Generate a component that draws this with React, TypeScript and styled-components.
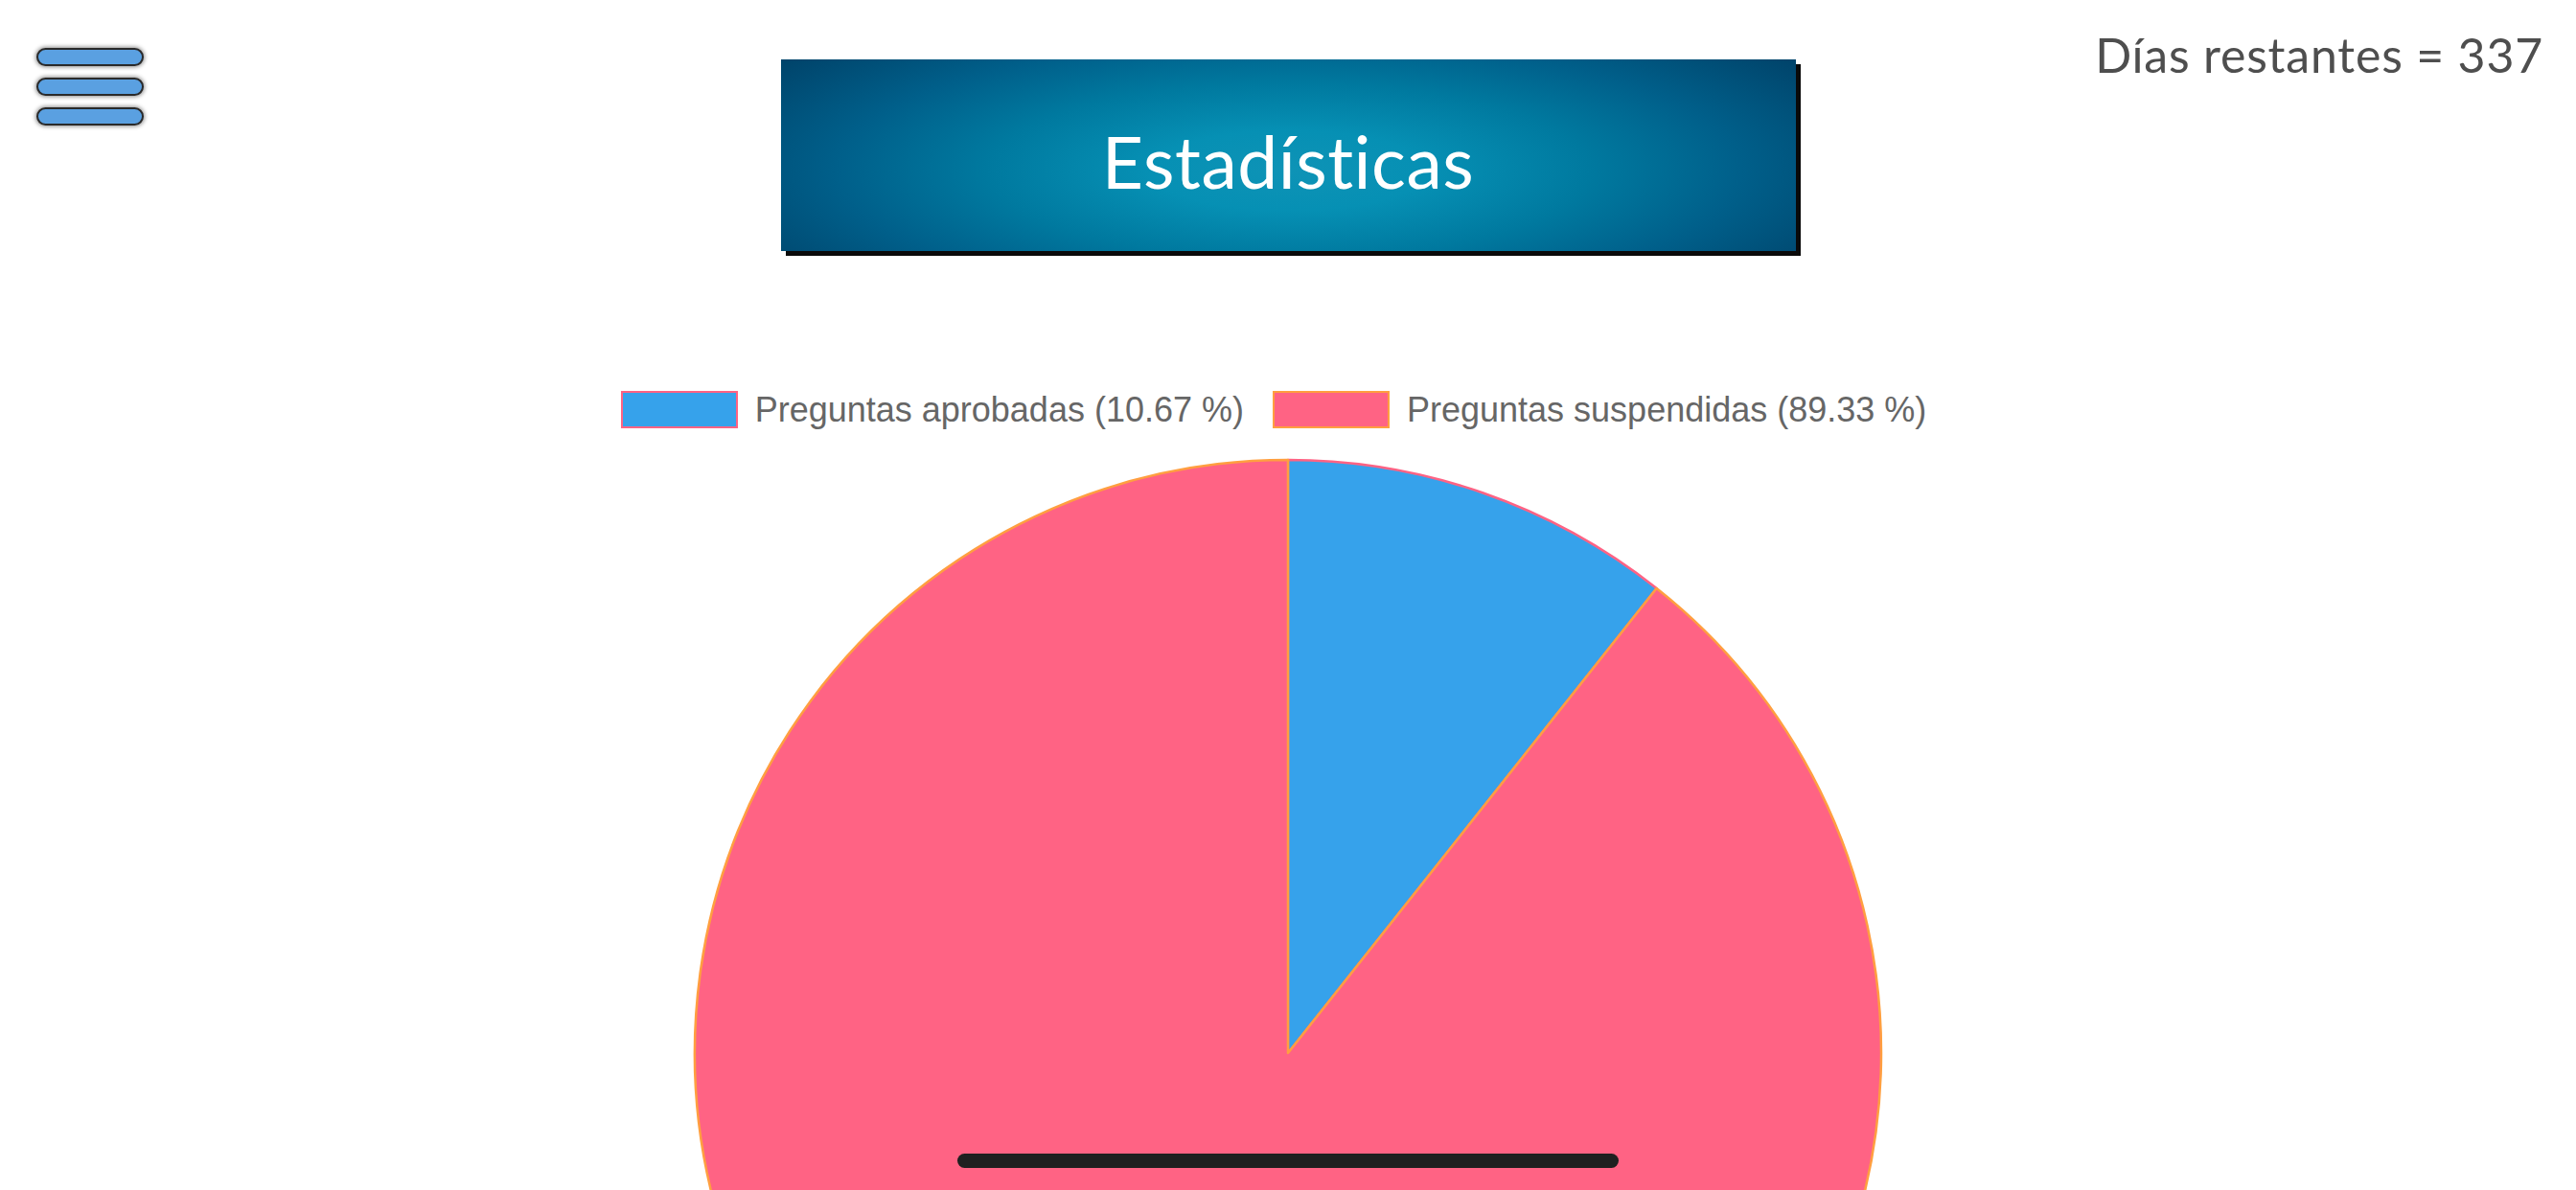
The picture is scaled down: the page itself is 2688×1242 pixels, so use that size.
import React from "react";
import styled, { createGlobalStyle } from "styled-components";

const Global = createGlobalStyle`
  html, body { margin: 0; padding: 0; background: #ffffff; overflow: hidden; }
  body { width: 2688px; height: 1242px; }
  * { box-sizing: border-box; }
`;

const Page = styled.div`
  position: relative;
  width: 2688px;
  height: 1242px;
  overflow: hidden;
  background: #ffffff;
`;

const Header = styled.header`
  display: grid;
  grid-template-columns: 1fr auto 1fr;
  align-items: start;
  height: 262px;
`;

const MenuButton = styled.button`
  display: flex;
  flex-direction: column;
  gap: 12px;
  margin: 50px 0 0 38px;
  padding: 0;
  border: none;
  background: transparent;
  width: 112px;
  justify-self: start;
`;

const MenuBar = styled.span`
  display: block;
  width: 112px;
  height: 19px;
  border-radius: 10px;
  background: #5aa0e1;
  border: 2px solid #2a2a2a;
  box-shadow: 0 0 4px 1px rgba(0, 0, 0, 0.45);
`;

const TitleBox = styled.div`
  margin-top: 62px;
  width: 1059px;
  height: 200px;
  padding-top: 12px;
  display: flex;
  align-items: center;
  justify-content: center;
  background: radial-gradient(
    ellipse 62% 95% at 50% 58%,
    #0e93b6 0%,
    #0690b4 22%,
    #00799f 48%,
    #005f8a 72%,
    #00446b 100%
  );
  box-shadow: 5px 5px 0 #0a0a0a;
`;

const Title = styled.h1`
  margin: 0;
  font-family: Lato, "Open Sans", sans-serif;
  font-weight: 400;
  font-size: 75px;
  color: #ffffff;
  letter-spacing: 0.5px;
`;

const Days = styled.div`
  justify-self: end;
  margin: 32px 34px 0 0;
  font-family: Lato, "Open Sans", sans-serif;
  font-size: 50px;
  line-height: 1;
  color: #4e4e4e;
  letter-spacing: 0.8px;
`;

const Legend = styled.div`
  display: flex;
  justify-content: center;
  align-items: center;
  gap: 30px;
  margin-top: 146px;
  padding-right: 30px;
  height: 39px;
`;

const LegendItem = styled.div`
  display: flex;
  align-items: center;
  gap: 18px;
`;

const Swatch = styled.span<{ $fill: string; $stroke: string }>`
  display: block;
  width: 122px;
  height: 39px;
  background: ${(p) => p.$fill};
  border: 2px solid ${(p) => p.$stroke};
`;

const LegendText = styled.span`
  font-family: "Liberation Sans", Arial, sans-serif;
  font-size: 36px;
  color: #666666;
`;

const ChartWrap = styled.div`
  display: flex;
  justify-content: center;
  margin-top: 29px;
`;

const HomeIndicator = styled.div`
  position: absolute;
  left: 999px;
  top: 1204px;
  width: 690px;
  height: 15px;
  border-radius: 8px;
  background: #1f2020;
`;

const Pie: React.FC<{ value: number }> = ({ value }) => {
  const size = 1246;
  const c = size / 2;
  const r = 619;
  const theta = value * 2 * Math.PI;
  const ex = c + r * Math.sin(theta);
  const ey = c - r * Math.cos(theta);
  const blue = `M ${c} ${c} L ${c} ${c - r} A ${r} ${r} 0 0 1 ${ex} ${ey} Z`;
  const pink = `M ${c} ${c} L ${ex} ${ey} A ${r} ${r} 0 1 1 ${c} ${c - r} Z`;
  return (
    <svg width={size} height={size} viewBox={`0 0 ${size} ${size}`}>
      <path d={blue} fill="#36a2eb" stroke="#ff6384" strokeWidth={2.5} strokeLinejoin="round" />
      <path d={pink} fill="#ff6384" stroke="#ff9f40" strokeWidth={2.5} strokeLinejoin="round" />
    </svg>
  );
};

export default function App() {
  return (
    <Page>
      <Global />
      <Header>
        <MenuButton aria-label="menu">
          <MenuBar />
          <MenuBar />
          <MenuBar />
        </MenuButton>
        <TitleBox>
          <Title>Estadísticas</Title>
        </TitleBox>
        <Days>Días restantes = 337</Days>
      </Header>
      <Legend>
        <LegendItem>
          <Swatch $fill="#36a2eb" $stroke="#ff6384" />
          <LegendText>Preguntas aprobadas (10.67 %)</LegendText>
        </LegendItem>
        <LegendItem>
          <Swatch $fill="#ff6384" $stroke="#ff9f40" />
          <LegendText>Preguntas suspendidas (89.33 %)</LegendText>
        </LegendItem>
      </Legend>
      <ChartWrap>
        <Pie value={0.1067} />
      </ChartWrap>
      <HomeIndicator />
    </Page>
  );
}
